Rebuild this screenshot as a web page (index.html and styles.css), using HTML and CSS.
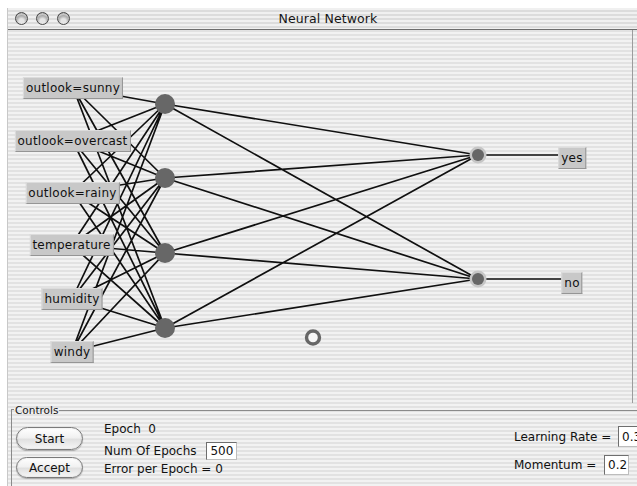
FILE: index.html
```html
<!DOCTYPE html>
<html>
<head>
<meta charset="utf-8">
<title>Neural Network</title>
<link rel="stylesheet" href="styles.css">
</head>
<body>
<div class="window">
  <div class="titlebar">
    <div class="lights">
      <span class="light"></span><span class="light"></span><span class="light"></span>
    </div>
    <div class="title">Neural Network</div>
    <div></div>
  </div>

  <div class="canvas">
    <svg class="net" width="624" height="373" viewBox="8 30 624 373">
      <path class="wire" d="M73 87.5L165 104M73 87.5L165 178M73 87.5L165 253M73 87.5L165 328
        M72.5 140.5L165 104M72.5 140.5L165 178M72.5 140.5L165 253M72.5 140.5L165 328
        M72.5 192.5L165 104M72.5 192.5L165 178M72.5 192.5L165 253M72.5 192.5L165 328
        M71.5 245L165 104M71.5 245L165 178M71.5 245L165 253M71.5 245L165 328
        M72 299L165 104M72 299L165 178M72 299L165 253M72 299L165 328
        M72 351.5L165 104M72 351.5L165 178M72 351.5L165 253M72 351.5L165 328
        M165 104L478 155M165 104L478 279M165 178L478 155M165 178L478 279
        M165 253L478 155M165 253L478 279M165 328L478 155M165 328L478 279
        M478 155L572 155M478 279L572 279"/>
      <circle class="hidden" cx="165" cy="104" r="10"/>
      <circle class="hidden" cx="165" cy="178" r="10"/>
      <circle class="hidden" cx="165" cy="253" r="10"/>
      <circle class="hidden" cx="165" cy="328" r="10"/>
      <circle class="halo" cx="478" cy="155" r="8.5"/>
      <circle class="out" cx="478" cy="155" r="6"/>
      <circle class="halo" cx="478" cy="279" r="8.5"/>
      <circle class="out" cx="478" cy="279" r="6"/>
      <circle class="ring" cx="313" cy="337.5" r="6.5"/>
    </svg>
    <div class="node-label n1">outlook=sunny</div>
    <div class="node-label n2">outlook=overcast</div>
    <div class="node-label n3">outlook=rainy</div>
    <div class="node-label n4">temperature</div>
    <div class="node-label n5">humidity</div>
    <div class="node-label n6">windy</div>
    <div class="node-label n7">yes</div>
    <div class="node-label n8">no</div>
  </div>

  <div class="group">
    <div class="group-head"><span class="legend">Controls</span></div>
    <div class="group-body">
      <div class="buttons">
        <button class="pill start">Start</button>
        <button class="pill accept">Accept</button>
      </div>
      <div class="info">
        <div class="row r1">Epoch&nbsp;&nbsp;0</div>
        <div class="row r2">Num Of Epochs <span class="field epochs">500</span></div>
        <div class="row r3">Error per Epoch = 0</div>
      </div>
      <div class="params">
        <div class="prow p1">Learning Rate = <span class="field rate">0.3</span></div>
        <div class="prow p2">Momentum = <span class="field mom">0.2</span></div>
      </div>
    </div>
  </div>
</div>
</body>
</html>
```

FILE: styles.css
```css
html, body {
  margin: 0;
  padding: 0;
  overflow: hidden;
  background: #ffffff;
}

body {
  width: 637px;
  height: 486px;
  font-family: "DejaVu Sans", "Liberation Sans", sans-serif;
  color: #111111;
}

.window {
  margin: 8px 0 0 8px;
  width: 640px;
  height: 478px;
  box-shadow: -1px 0 0 #c8c8c8;
  background: repeating-linear-gradient(to bottom, #f2f2f2 0 2px, #e2e2e2 2px 4px);
}

.titlebar {
  height: 21px;
  border-bottom: 1px solid #6c6c6c;
  display: grid;
  grid-template-columns: 1fr auto 1fr;
  align-items: center;
  background: repeating-linear-gradient(to bottom, #f0f0f0 0 2px, #dcdcdc 2px 4px);
}

.lights {
  display: flex;
  gap: 8px;
  padding-left: 7px;
}

.light {
  width: 11px;
  height: 11px;
  border-radius: 50%;
  border: 1.5px solid #4a4a4a;
  background: radial-gradient(circle at 50% 75%, #e6e6e6 0 25%, #a0a0a0 60%, #6a6a6a 100%);
  box-shadow: inset 0 2px 1px rgba(255,255,255,0.5);
}

.title {
  font-size: 12.5px;
  color: #151515;
  letter-spacing: 0.1px;
}

.canvas {
  position: relative;
  width: 624px;
  height: 373px;
  border-right: 1px solid #9c9c9c;
}

.net {
  display: block;
}

.wire {
  fill: none;
  stroke: #101010;
  stroke-width: 1.7;
}

.hidden {
  fill: #676767;
}

.halo {
  fill: #c6c6c6;
}

.out {
  fill: #666666;
}

.ring {
  fill: #f6f6f6;
  stroke: #666666;
  stroke-width: 3.4;
}

.node-label {
  position: absolute;
  transform: translate(-50%, -50%);
  background: #c8c8c8;
  border: 1px solid;
  border-color: #dcdcdc #959595 #959595 #dcdcdc;
  padding: 2px 2px;
  font-size: 12px;
  line-height: 16px;
  letter-spacing: 0.25px;
  color: #111111;
  white-space: nowrap;
}

.n1 { left: 65px; top: 57.5px; }
.n2 { left: 64.5px; top: 110.5px; }
.n3 { left: 64.5px; top: 162.5px; }
.n4 { left: 63.5px; top: 215px; }
.n5 { left: 64px; top: 269px; }
.n6 { left: 64px; top: 321.5px; }
.n7 { left: 564px; top: 128px; }
.n8 { left: 564px; top: 252.5px; }

.group {
  margin-left: 3px;
}

.group-head {
  display: flex;
  align-items: center;
  height: 12px;
  margin-top: 1px;
}

.group-head::before {
  content: "";
  align-self: flex-end;
  width: 2px;
  height: 6px;
  border-top: 1px solid #8a8a8a;
  border-left: 1px solid #8a8a8a;
}

.group-head::after {
  content: "";
  flex: 1;
  border-top: 1px solid #8a8a8a;
  margin-top: 1px;
}

.legend {
  font-size: 10.5px;
  line-height: 12px;
  padding: 0 1px;
  color: #151515;
}

.group-body {
  display: flex;
  align-items: flex-start;
  border-left: 1px solid #8a8a8a;
  height: 70px;
  padding-top: 5px;
  font-size: 12px;
}

.buttons {
  display: flex;
  flex-direction: column;
  gap: 7px;
  margin: 6px 0 0 4px;
}

.pill {
  width: 67px;
  border: 1px solid #7a7a7a;
  border-radius: 12px;
  background: linear-gradient(to bottom, #ffffff 0%, #f1f1f1 45%, #e0e0e0 55%, #f7f7f7 100%);
  box-shadow: 0 1px 1px rgba(0,0,0,0.25), inset 0 0 2px rgba(0,0,0,0.15);
  font-family: "DejaVu Sans", sans-serif;
  font-size: 12px;
  color: #111111;
  padding: 0;
}

.start { height: 23px; }
.accept { height: 21px; }

.info {
  display: flex;
  flex-direction: column;
  margin-left: 21px;
}

.row {
  display: flex;
  align-items: center;
  white-space: pre;
}

.r1 { height: 16px; }
.r2 { height: 20px; margin-top: 4px; }
.r3 { height: 16px; }

.field {
  display: inline-flex;
  align-items: center;
  background: #ffffff;
  border: 1px solid;
  border-color: #6e6e6e #bdbdbd #bdbdbd #6e6e6e;
  padding: 0 3px;
  box-sizing: border-box;
}

.epochs {
  margin-left: 6px;
  width: 31px;
  height: 18px;
}

.params {
  margin-left: auto;
  width: 134px;
  display: flex;
  flex-direction: column;
  margin-top: 5px;
}

.prow {
  display: flex;
  align-items: center;
  white-space: pre;
}

.p1 { height: 21px; }
.p2 { height: 20px; margin-top: 8px; }

.rate {
  margin-left: 3px;
  width: 28px;
  height: 21px;
}

.mom {
  margin-left: 4px;
  width: 25px;
  height: 20px;
}
```
